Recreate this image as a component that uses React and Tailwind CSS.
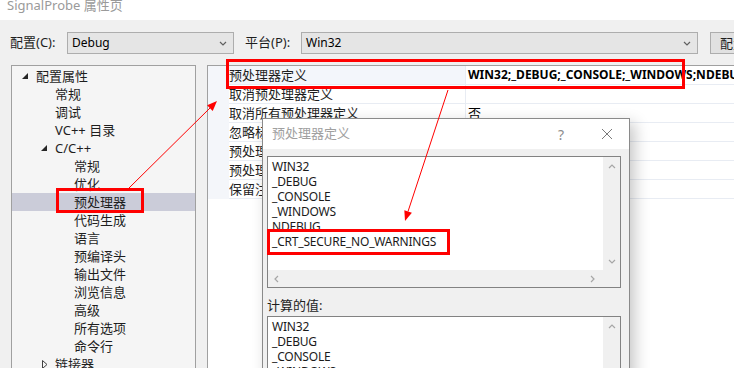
import React from "react"

const FONT = { fontFamily: '"Noto Sans", "Noto Sans CJK SC", sans-serif' }

function Chevron({ dir = "down", className = "" }) {
  const pts = {
    down: "1,1 4,4 7,1",
    up: "1,4 4,1 7,4",
    left: "4,1 1,4 4,7",
    right: "1,1 4,4 1,7",
  }[dir]
  const vertical = dir === "down" || dir === "up"
  return (
    <svg
      width={vertical ? 8 : 5}
      height={vertical ? 5 : 8}
      viewBox={vertical ? "0 0 8 5" : "0 0 5 8"}
      className={className}
    >
      <polyline points={pts} fill="none" stroke="currentColor" strokeWidth="1.2" />
    </svg>
  )
}

function Dropdown({ value, width }) {
  return (
    <div
      className={`flex shrink-0 items-center h-[22px] border border-[#adadad] bg-[#e5e5e5] pl-[4px] pr-[6px] text-[12px] text-black ${width}`}
    >
      <span className="flex-1">{value}</span>
      <Chevron dir="down" className="text-[#606060]" />
    </div>
  )
}

const tree = [
  { label: "配置属性", level: 0, node: "open" },
  { label: "常规", level: 1 },
  { label: "调试", level: 1 },
  { label: "VC++ 目录", level: 1 },
  { label: "C/C++", level: 1, node: "open" },
  { label: "常规", level: 2 },
  { label: "优化", level: 2 },
  { label: "预处理器", level: 2, selected: true },
  { label: "代码生成", level: 2 },
  { label: "语言", level: 2 },
  { label: "预编译头", level: 2 },
  { label: "输出文件", level: 2 },
  { label: "浏览信息", level: 2 },
  { label: "高级", level: 2 },
  { label: "所有选项", level: 2 },
  { label: "命令行", level: 2 },
  { label: "链接器", level: 1, node: "closed" },
]

const indent = ["pl-[10px]", "pl-[29px]", "pl-[48px]"]

function TreeRow({ item }) {
  return (
    <div
      className={`flex items-center h-[18px] ${indent[item.level]} ${
        item.selected ? "bg-[#cbccd9]" : ""
      }`}
    >
      <span className="w-[14px] flex items-center">
        {item.node === "open" && (
          <svg width="6" height="6" viewBox="0 0 6 6">
            <polygon points="6,0 6,6 0,6" fill="#262626" />
          </svg>
        )}
        {item.node === "closed" && (
          <svg width="6" height="9" viewBox="0 0 6 9" className="ml-[1px]">
            <polygon points="0.5,0.5 5,4.5 0.5,8.5" fill="none" stroke="#404040" />
          </svg>
        )}
      </span>
      <span className="text-[13px] leading-[18px] text-[#1e1e1e]">{item.label}</span>
    </div>
  )
}

const props = [
  { name: "预处理器定义", value: "WIN32;_DEBUG;_CONSOLE;_WINDOWS;NDEBUG;%(PreprocessorDefinitions)", bold: true },
  { name: "取消预处理器定义", value: "" },
  { name: "取消所有预处理器定义", value: "否" },
  { name: "忽略标准包含路径", value: "" },
  { name: "预处理到文件", value: "" },
  { name: "预处理取消显示行号", value: "" },
  { name: "保留注释", value: "" },
]

function ListBox({ lines, height, bottomBar }) {
  return (
    <div className={`flex flex-col w-[354px] border border-[#828282] bg-white ${height}`}>
      <div className="flex flex-1 min-h-0">
        <div className="flex-1 pl-[4px] pt-[2px] overflow-hidden">
          {lines.map((l) => (
            <div key={l} className="text-[12px] leading-[15px] tracking-[-0.2px] text-[#1a1a1a] whitespace-nowrap">
              {l}
            </div>
          ))}
        </div>
        <div className="w-[17px] bg-[#f0f0f0] flex flex-col items-center justify-between pt-[7px] pb-[6px] text-[#a6a6a6]">
          <Chevron dir="up" />
          {bottomBar && <Chevron dir="down" />}
        </div>
      </div>
      {bottomBar && (
        <div className="h-[17px] bg-[#f0f0f0] flex items-center text-[#a6a6a6]">
          <div className="w-[335px] flex items-center justify-between pl-[6px] pr-[8px]">
            <Chevron dir="left" />
            <Chevron dir="right" />
          </div>
        </div>
      )}
    </div>
  )
}

export default function App() {
  const defs = ["WIN32", "_DEBUG", "_CONSOLE", "_WINDOWS", "NDEBUG", "_CRT_SECURE_NO_WARNINGS"]
  return (
    <div className="relative w-[734px] h-[368px] overflow-hidden bg-[#f0f0f0]" style={FONT}>
      {/* title bar */}
      <div className="h-[20px] bg-white pl-[7px] text-[13px] leading-[10px] text-[#9a9a9a] whitespace-nowrap">
        SignalProbe 属性页
      </div>

      {/* config row */}
      <div className="flex items-center mt-[12px] h-[22px] whitespace-nowrap text-[13px] text-[#1e1e1e]">
        <span className="shrink-0 pl-[10px] w-[67px]">配置(C):</span>
        <Dropdown value="Debug" width="w-[167px]" />
        <span className="shrink-0 ml-[11px] w-[56px]">平台(P):</span>
        <Dropdown value="Win32" width="w-[397px]" />
        <div className="ml-[12px] h-[22px] w-[90px] shrink-0 border border-[#adadad] bg-[#e1e1e1] pl-[9px] leading-[20px]">
          配置管理器(O)...
        </div>
      </div>

      {/* main panels */}
      <div className="flex mt-[11px] pl-[11px] gap-[11px] h-[320px]">
        <div className="w-[185px] shrink-0 border border-[#a0a0a0] bg-[#f5f5f5] pt-[1px]">
          {tree.map((t, i) => (
            <TreeRow key={i} item={t} />
          ))}
        </div>

        <div className="w-[600px] shrink-0 border-l border-t border-[#a0a0a0] bg-white">
          {props.map((p, i) => (
            <div key={i} className="flex h-[19px]">
              <div className="w-[21px] shrink-0 bg-[#f4f6fa]" />
              <div
                className={`w-[237px] shrink-0 border-b border-r border-[#e8ecf3] text-[13px] leading-[18px] text-[#1e1e1e] whitespace-nowrap overflow-hidden ${
                  i === 0 ? "bg-[#f3f6fb]" : ""
                }`}
              >
                {p.name}
              </div>
              <div
                className={`flex-1 border-b border-[#e8ecf3] pl-[2px] leading-[18px] whitespace-nowrap overflow-hidden text-black ${
                  p.bold ? "font-bold text-[12px]" : "text-[13px]"
                }`}
              >
                {p.value}
              </div>
            </div>
          ))}
        </div>
      </div>

      {/* dialog */}
      <div className="absolute left-[262px] top-[118px] w-[368px] h-[262px] border border-[#8a8a8a] bg-[#f0f0f0] shadow-[5px_5px_14px_rgba(0,0,0,0.22)]">
        <div className="h-[30px] bg-white flex items-center pl-[9px] pr-[16px] text-[13px] text-[#a0a0a0]">
          <span className="flex-1">预处理器定义</span>
          <span className="mr-[37px] text-[14px] text-[#8c8c8c]">?</span>
          <svg width="12" height="12" viewBox="0 0 12 12">
            <path d="M1 1 L11 11 M11 1 L1 11" stroke="#7a7a7a" strokeWidth="1" />
          </svg>
        </div>
        <div className="pl-[4px] pt-[7px]">
          <ListBox lines={defs} height="h-[132px]" bottomBar />
          <div className="mt-[8px] text-[13px] leading-[18px] text-[#1e1e1e]">计算的值:</div>
          <div className="mt-[2px]">
            <ListBox lines={["WIN32", "_DEBUG", "_CONSOLE", "_WINDOWS", "NDEBUG"]} height="h-[80px]" />
          </div>
        </div>
      </div>

      {/* annotations */}
      <div className="absolute left-[226px] top-[59px] w-[459px] h-[30px] border-[3px] border-[#ff0000]" />
      <div className="absolute left-[56px] top-[188px] w-[88px] h-[25px] border-[3px] border-[#ff0000]" />
      <div className="absolute left-[267px] top-[229px] w-[183px] h-[26px] border-[3px] border-[#ff0000]" />
      <svg className="absolute left-0 top-0 pointer-events-none" width="734" height="368">
        <line x1="129" y1="188" x2="210" y2="108" stroke="#ff0000" strokeWidth="1" />
        <polygon points="217,101 212.7,110.9 207.1,105.2" fill="#ff0000" />
        <line x1="448" y1="90" x2="408" y2="211.5" stroke="#ff0000" strokeWidth="1" />
        <polygon points="405,221 411.9,212.7 404.3,210.3" fill="#ff0000" />
      </svg>
    </div>
  )
}
